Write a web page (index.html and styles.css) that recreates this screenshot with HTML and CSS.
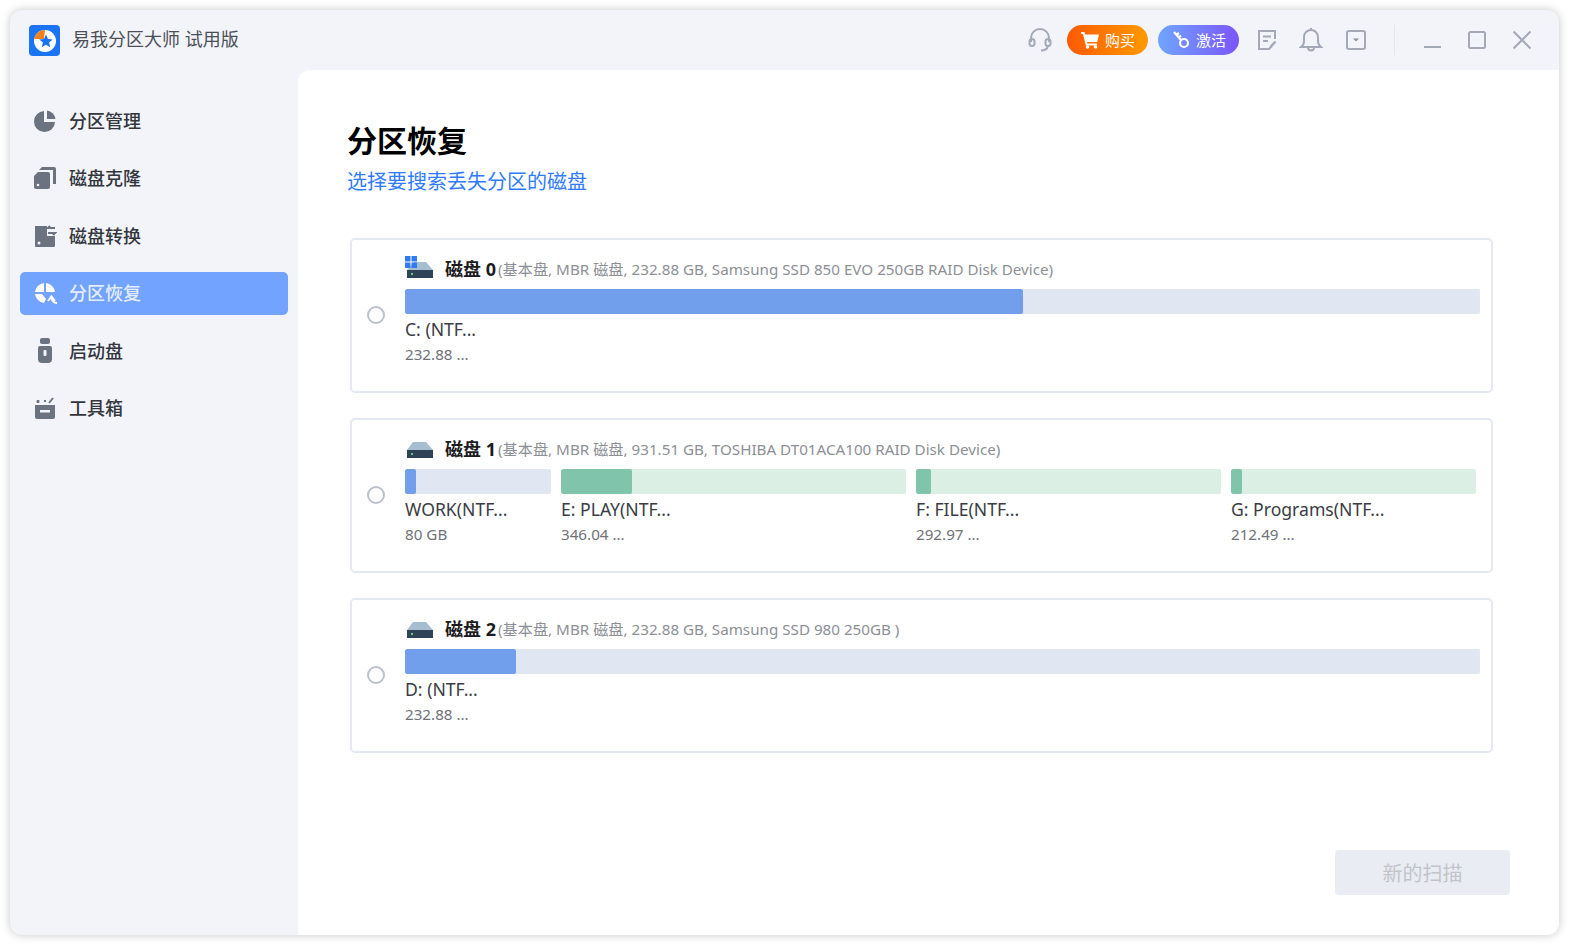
FILE: index.html
```html
<!DOCTYPE html>
<html lang="zh-CN">
<head>
    <meta charset="UTF-8">
    <title>易我分区大师 试用版</title>
    <link rel="stylesheet" href="styles.css">
</head>
<body>

<div class="app">

    <div class="titlebar">
        <svg class="logo" width="31" height="31" viewBox="0 0 31 31">
            <rect width="31" height="31" rx="4" fill="#1b74f5"/>
            <circle cx="16" cy="16" r="11" fill="#fff"/>
            <path d="M16 5 A11 11 0 0 0 5 14 L15 14 Z" fill="#f5811a"/>
            <path d="M17 9.500 l2 4.500 4.700 .4 -3.600 3.100 1.100 4.700 -4.200 -2.500 -4.200 2.500 1.100 -4.700 -3.600 -3.100 4.700 -.4 Z" fill="#1b74f5"/>
        </svg>
        <span class="app-name">易我分区大师 试用版</span>

        <div class="tools">
            <svg class="tool" width="26" height="26" viewBox="0 0 26 26" fill="none" stroke="#a4a9b8" stroke-width="2">
                <path d="M4 15 V11 a9 9 0 0 1 18 0 V15"/>
                <rect x="2.500" y="12" width="5" height="7" rx="2.500"/>
                <rect x="18.500" y="12" width="5" height="7" rx="2.500"/>
                <path d="M21 19 q-1 4.500 -7 4.500"/>
            </svg>
            <div class="pill pill-buy">
                <svg width="20" height="18" viewBox="0 0 20 18" fill="#fff">
                    <path d="M1 1 h3.500 l.8 2.500 H19 l-1.800 7.500 H7 l.4 1.500 H17 v2 H5.800 L3 3 H1 Z"/>
                    <circle cx="7.500" cy="16" r="1.800"/>
                    <circle cx="15.500" cy="16" r="1.800"/>
                </svg>
                <span>购买</span>
            </div>
            <div class="pill pill-key">
                <svg width="20" height="20" viewBox="0 0 20 20" fill="none" stroke="#fff" stroke-width="2.200">
                    <circle cx="13" cy="13" r="4"/>
                    <path d="M10 10 L3 2 M5 5 L8 3 M7.500 7.500 L10 5.500"/>
                </svg>
                <span>激活</span>
            </div>
            <svg class="tool note-icon" width="22" height="24" viewBox="0 0 22 24" fill="none" stroke="#a4a9b8" stroke-width="2">
                <path d="M16 18 L13 21 H3 V3 H19 V11"/>
                <path d="M7 8.500 H15 M7 13 H12"/>
                <path d="M19.500 13.500 L14.500 19" stroke-width="2.500"/>
            </svg>
            <svg class="tool bell-icon" width="24" height="26" viewBox="0 0 24 26" fill="none" stroke="#a4a9b8" stroke-width="2">
                <path d="M2 20 q3 -2 3 -6 V10 a7 7 0 0 1 14 0 v4 q0 4 3 6 Z"/>
                <path d="M9 20.500 a3 3 0 0 0 6 0"/>
                <path d="M12 1 v2"/>
            </svg>
            <svg class="tool down-icon" width="22" height="22" viewBox="0 0 22 22" fill="none" stroke="#a4a9b8" stroke-width="2">
                <rect x="2" y="2" width="18" height="18" rx="2"/>
                <path d="M8 9.500 H14 L11 12.500 Z" fill="#8a8fa0" stroke="none"/>
            </svg>
            <div class="divider"></div>
            <svg class="win-btn" width="20" height="20" viewBox="0 0 20 20" stroke="#a4a9b8" stroke-width="2" fill="none"><path d="M2 17 H19"/></svg>
            <svg class="win-btn" width="20" height="20" viewBox="0 0 20 20" stroke="#a4a9b8" stroke-width="2" fill="none"><rect x="2" y="2" width="16" height="16" rx="1.500"/></svg>
            <svg class="win-btn" width="20" height="20" viewBox="0 0 20 20" stroke="#a4a9b8" stroke-width="2" fill="none"><path d="M1.500 1.500 L18.500 18.500 M18.500 1.500 L1.500 18.500"/></svg>
        </div>
    </div>

    <div class="body">

        <div class="sidebar">
            <div class="nav-item">
                <svg class="nav-icon" width="24" height="24" viewBox="0 0 24 24" fill="#6b7280">
                    <path d="M11 2 V13 H22 A10.500 10.500 0 1 1 11 2 Z"/>
                    <path d="M14 1.500 A10 10 0 0 1 22.500 10 H14 Z"/>
                </svg>
                <span>分区管理</span>
            </div>
            <div class="nav-item">
                <svg class="nav-icon" width="24" height="24" viewBox="0 0 24 24" fill="#6b7280">
                    <path d="M5 6 H15 a2 2 0 0 1 2 2 V21 a2 2 0 0 1 -2 2 H3 a2 2 0 0 1 -2 -2 V10 Z"/>
                    <path d="M9 1 H21 a2 2 0 0 1 2 2 V18 H20 V4 H6 Z"/>
                    <circle cx="5" cy="19" r="1.300" fill="#f2f4f9"/>
                </svg>
                <span>磁盘克隆</span>
            </div>
            <div class="nav-item">
                <svg class="nav-icon" width="24" height="24" viewBox="0 0 24 24" fill="#6b7280">
                    <path d="M2 2 H14 V12 H22 V22 a1 1 0 0 1 -1 1 H3 a1 1 0 0 1 -1 -1 Z"/>
                    <circle cx="6" cy="19" r="1.500" fill="#f2f4f9"/>
                    <path d="M22 4 H15 L17 2 M15 9 H22 L20 11" fill="none" stroke="#6b7280" stroke-width="2"/>
                </svg>
                <span>磁盘转换</span>
            </div>
            <div class="nav-item active">
                <svg class="nav-icon" width="24" height="24" viewBox="0 0 24 24" fill="#fff">
                    <path d="M11 2 V11 H2 A10 10 0 0 1 11 2 Z"/>
                    <path d="M13 2 A10 10 0 0 1 22 11 H13 Z"/>
                    <path d="M2 13 H9 L13 18 L11 22 A10 10 0 0 1 2 13 Z"/>
                    <path d="M15 20 L18.500 15.500 L22 20 M18.500 16 Q19 22 24 22" fill="none" stroke="#fff" stroke-width="2"/>
                </svg>
                <span>分区恢复</span>
            </div>
            <div class="nav-item">
                <svg class="nav-icon" width="24" height="26" viewBox="0 0 24 26" fill="#6b7280">
                    <rect x="7" y="0" width="10" height="6" rx="2"/>
                    <path d="M5 10 a2 2 0 0 1 2 -2 H17 a2 2 0 0 1 2 2 V21 a4 4 0 0 1 -4 4 H9 a4 4 0 0 1 -4 -4 Z"/>
                    <rect x="10.500" y="12" width="3" height="6" rx="1" fill="#f2f4f9"/>
                </svg>
                <span>启动盘</span>
            </div>
            <div class="nav-item">
                <svg class="nav-icon" width="24" height="24" viewBox="0 0 24 24" fill="#6b7280">
                    <path d="M2 9 H22 V21 a2 2 0 0 1 -2 2 H4 a2 2 0 0 1 -2 -2 Z"/>
                    <rect x="7" y="14" width="10" height="2.500" fill="#f2f4f9"/>
                    <path d="M5 7 V4 M3.500 5.500 H6.500 M11 5 H13 M16 7 L20 2" fill="none" stroke="#6b7280" stroke-width="2"/>
                </svg>
                <span>工具箱</span>
            </div>
        </div>

        <div class="main">
            <h1 class="title">分区恢复</h1>
            <p class="subtitle">选择要搜索丢失分区的磁盘</p>

            <div class="disk-list">

                <div class="disk-card">
                    <div class="radio"></div>
                    <div class="disk-info">
                        <div class="disk-head">
                            <svg class="disk-icon" width="29" height="24" viewBox="0 0 29 24">
                                <path d="M9 7 H21 L28 15 H2 Z" fill="#a7bdd0"/>
                                <path d="M2 15 H28 V23 H2 Z" fill="#2f4256"/>
                                <rect x="6" y="18" width="2" height="2" fill="#5fd07a"/>
                                <rect x="0" y="1" width="5.500" height="5.500" fill="#2f7bf0"/>
                                <rect x="6.500" y="1" width="5.500" height="5.500" fill="#2f7bf0"/>
                                <rect x="0" y="7.500" width="5.500" height="5.500" fill="#2f7bf0"/>
                                <rect x="6.500" y="7.500" width="5.500" height="5.500" fill="#2f7bf0"/>
                            </svg>
                            <span class="disk-name">磁盘 0</span>
                            <span class="disk-desc">(基本盘, MBR 磁盘, 232.88 GB, Samsung SSD 850 EVO 250GB RAID Disk Device)</span>
                        </div>
                        <div class="parts">
                            <div class="part part-full">
                                <div class="bar"><div class="fill" style="width:618px"></div></div>
                                <div class="part-name">C: (NTF...</div>
                                <div class="part-size">232.88 ...</div>
                            </div>
                        </div>
                    </div>
                </div>

                <div class="disk-card">
                    <div class="radio"></div>
                    <div class="disk-info">
                        <div class="disk-head">
                            <svg class="disk-icon" width="29" height="24" viewBox="0 0 29 24">
                                <path d="M8 7 H21 L28 15 H2 Z" fill="#a7bdd0"/>
                                <path d="M2 15 H28 V23 H2 Z" fill="#2f4256"/>
                                <rect x="6" y="18" width="2" height="2" fill="#5fd07a"/>
                            </svg>
                            <span class="disk-name">磁盘 1</span>
                            <span class="disk-desc">(基本盘, MBR 磁盘, 931.51 GB, TOSHIBA DT01ACA100 RAID Disk Device)</span>
                        </div>
                        <div class="parts">
                            <div class="part" style="width:146px">
                                <div class="bar"><div class="fill" style="width:11px"></div></div>
                                <div class="part-name">WORK(NTF...</div>
                                <div class="part-size">80 GB</div>
                            </div>
                            <div class="part" style="width:345px">
                                <div class="bar green"><div class="fill" style="width:71px"></div></div>
                                <div class="part-name">E: PLAY(NTF...</div>
                                <div class="part-size">346.04 ...</div>
                            </div>
                            <div class="part" style="width:305px">
                                <div class="bar green"><div class="fill" style="width:15px"></div></div>
                                <div class="part-name">F: FILE(NTF...</div>
                                <div class="part-size">292.97 ...</div>
                            </div>
                            <div class="part" style="width:245px">
                                <div class="bar green"><div class="fill" style="width:11px"></div></div>
                                <div class="part-name">G: Programs(NTF...</div>
                                <div class="part-size">212.49 ...</div>
                            </div>
                        </div>
                    </div>
                </div>

                <div class="disk-card">
                    <div class="radio"></div>
                    <div class="disk-info">
                        <div class="disk-head">
                            <svg class="disk-icon" width="29" height="24" viewBox="0 0 29 24">
                                <path d="M8 7 H21 L28 15 H2 Z" fill="#a7bdd0"/>
                                <path d="M2 15 H28 V23 H2 Z" fill="#2f4256"/>
                                <rect x="6" y="18" width="2" height="2" fill="#5fd07a"/>
                            </svg>
                            <span class="disk-name">磁盘 2</span>
                            <span class="disk-desc">(基本盘, MBR 磁盘, 232.88 GB, Samsung SSD 980 250GB )</span>
                        </div>
                        <div class="parts">
                            <div class="part part-full">
                                <div class="bar"><div class="fill" style="width:111px"></div></div>
                                <div class="part-name">D: (NTF...</div>
                                <div class="part-size">232.88 ...</div>
                            </div>
                        </div>
                    </div>
                </div>

            </div>

            <div class="footer">
                <div class="scan-btn">新的扫描</div>
            </div>
        </div>

    </div>
</div>

</body>
</html>
```

FILE: styles.css
```css
* {
    box-sizing: border-box;
}

html, body {
    height: 100%;
    margin: 0;
}

body {
    padding: 10px 11px 10px 10px;
    background-color: #fff;
    font-family: "Noto Sans", "Noto Sans CJK SC", sans-serif;
    overflow: hidden;
}

.app {
    height: 100%;
    display: flex;
    flex-direction: column;
    background-color: #f2f4f9;
    border-radius: 12px;
    box-shadow: 0 0 10px rgba(0, 0, 0, 0.22);
    overflow: hidden;
}

/* top bar */
.titlebar {
    height: 60px;
    flex-shrink: 0;
    display: flex;
    align-items: center;
    padding-left: 19px;
}

.logo {
    margin-right: 12px;
}

.app-name {
    padding-bottom: 4px;
    font-size: 18px;
    color: #4b4f58;
}

.tools {
    margin-left: auto;
    display: flex;
    align-items: center;
    padding-right: 27px;
}

.pill {
    width: 81px;
    height: 30px;
    border-radius: 15px;
    display: flex;
    align-items: center;
    padding-left: 13px;
    gap: 5px;
    color: #fff;
    font-size: 15px;
}

.pill span {
    padding-bottom: 2px;
}

.pill-buy {
    margin-left: 14px;
    background: linear-gradient(90deg, #ff5a00, #ff9a00);
}

.pill-key {
    margin-left: 10px;
    background: linear-gradient(90deg, #6fa5ff, #7c55ff);
}

.note-icon {
    margin-left: 17px;
}

.bell-icon {
    margin-left: 21px;
}

.down-icon {
    margin-left: 22px;
}

.divider {
    width: 1px;
    height: 30px;
    margin: 0 17px 0 27px;
    background-color: #e3e6ee;
}

.win-btn {
    margin-left: 10px;
    margin-right: 15px;
}

.win-btn:last-child {
    margin-right: 0;
}

/* sidebar and content */
.body {
    flex: 1;
    display: flex;
    min-height: 0;
}

.sidebar {
    width: 288px;
    flex-shrink: 0;
    padding: 29px 10px 0 10px;
    display: flex;
    flex-direction: column;
    gap: 14.500px;
}

.nav-item {
    height: 43px;
    display: flex;
    align-items: center;
    padding-left: 13px;
    border-radius: 5px;
    font-size: 18px;
    font-weight: 500;
    color: #33363d;
}

.nav-item span {
    padding-bottom: 2px;
}

.nav-item.active {
    background-color: #72a4ff;
    color: #e4edff;
}

.nav-icon {
    width: 24px;
    margin-right: 12px;
}

.main {
    flex: 1;
    min-width: 0;
    display: flex;
    flex-direction: column;
    padding: 50px 67px 40px 50px;
    background-color: #fff;
    border-radius: 12px 0 0 0;
}

.title {
    margin: 0 0 0 -1px;
    font-size: 30px;
    line-height: 42px;
    font-weight: 700;
    color: #000;
}

.subtitle {
    margin: 6px 0 0 -1px;
    font-size: 20px;
    line-height: 28px;
    color: #2f7bff;
}

.disk-list {
    margin-top: 42px;
    margin-left: 2px;
    display: flex;
    flex-direction: column;
    gap: 25px;
    width: 1143px;
}

.disk-card {
    height: 155px;
    display: flex;
    align-items: center;
    padding-left: 15px;
    border: 2px solid #e4e8f2;
    border-radius: 5px;
}

.radio {
    width: 18px;
    height: 18px;
    flex-shrink: 0;
    margin-right: 20px;
    margin-bottom: 1px;
    border: 2px solid #bcc1c9;
    border-radius: 50%;
}

.disk-info {
    flex: 1;
    align-self: flex-start;
    padding-top: 17px;
    padding-right: 11px;
}

.disk-head {
    height: 26px;
    display: flex;
    align-items: center;
}

.disk-icon {
    margin-right: 11px;
    margin-bottom: 6px;
}

.disk-name {
    margin-right: 2px;
    padding-bottom: 4px;
    font-size: 18px;
    font-weight: 700;
    color: #1c1c1e;
}

.disk-desc {
    padding-bottom: 4px;
    font-size: 15.200px;
    color: #8c8f96;
}

.parts {
    margin-top: 6px;
    display: flex;
    gap: 10px;
}

.part-full {
    width: 100%;
}

.bar {
    height: 25px;
    background-color: #e0e7f3;
    border-radius: 2px;
    overflow: hidden;
}

.bar.green {
    background-color: #dcefe4;
}

.fill {
    height: 100%;
    background-color: #719feb;
    border-radius: 2px;
}

.bar.green .fill {
    background-color: #80c4ab;
}

.part-name {
    margin-top: 2px;
    font-size: 17.600px;
    line-height: 27px;
    color: #3a3d44;
    white-space: nowrap;
}

.part-size {
    font-size: 15.200px;
    line-height: 22px;
    color: #6f7278;
}

.footer {
    margin-top: auto;
    display: flex;
    justify-content: flex-end;
}

.scan-btn {
    width: 175px;
    height: 45px;
    display: flex;
    align-items: center;
    justify-content: center;
    margin-right: -18px;
    background-color: #e9ecf3;
    border-radius: 4px;
    font-size: 20px;
    color: #c2c4c9;
}
```
